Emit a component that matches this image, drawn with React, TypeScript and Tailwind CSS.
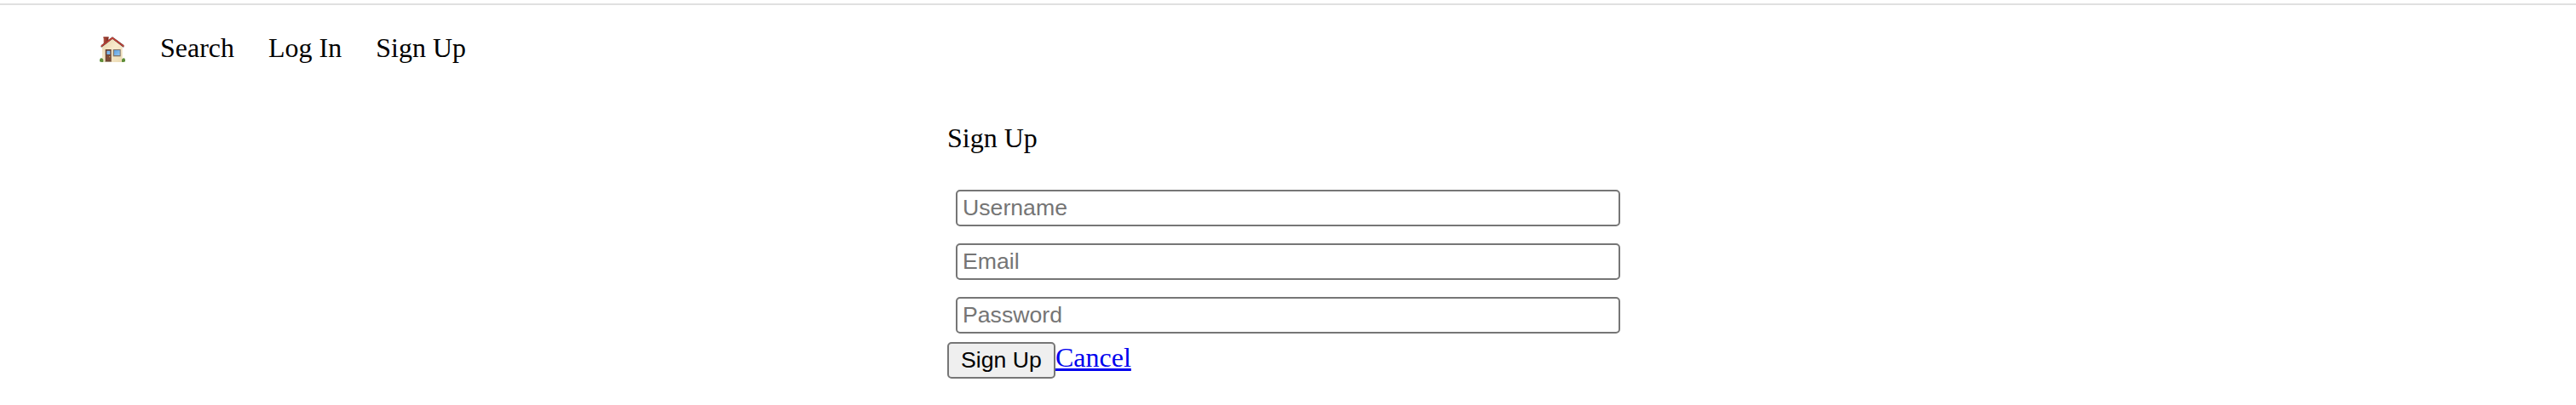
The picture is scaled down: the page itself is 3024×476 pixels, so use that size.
import React from "react";

const House = () => (
  <svg className="h-8 w-8" viewBox="0 0 96 96" role="img" aria-label="Home">
    <defs>
      <linearGradient id="wall" x1="0" y1="0" x2="1" y2="1">
        <stop offset="0" stopColor="#e6d3ab" />
        <stop offset="0.5" stopColor="#f8ebcd" />
        <stop offset="1" stopColor="#ead9b3" />
      </linearGradient>
      <linearGradient id="pane" x1="0" y1="0" x2="1" y2="1">
        <stop offset="0" stopColor="#5c9fe0" />
        <stop offset="1" stopColor="#91c6f2" />
      </linearGradient>
      <linearGradient id="brick" x1="0" y1="0" x2="1" y2="0">
        <stop offset="0" stopColor="#b4513f" />
        <stop offset="1" stopColor="#7c2a20" />
      </linearGradient>
    </defs>
    <rect x="17" y="5" width="17" height="27" fill="url(#brick)" />
    <rect x="16" y="4" width="19" height="4" fill="#93392d" />
    <path d="M12 38 L48 9 L83 38 V93 H12Z" fill="url(#wall)" />
    <path d="M8 40 L48 9 L88 40" fill="none" stroke="#3f3836" strokeWidth="4" />
    <path d="M9 35 L48 6 L88 35" fill="none" stroke="#5a3633" strokeWidth="4" />
    <path d="M8 37.5 L48 8 L88 37.5" fill="none" stroke="#cf3f35" strokeWidth="4.5" />
    <rect x="23" y="48" width="21" height="44" fill="#69402f" />
    <rect x="26" y="68" width="15" height="20" fill="#7e4d39" />
    <rect x="28" y="53" width="12" height="13" fill="#7db8ec" />
    <circle cx="38" cy="74" r="2" fill="#d8a65b" />
    <rect x="50" y="48" width="27" height="25" fill="#7f756b" />
    <rect x="54" y="51" width="20" height="18" fill="url(#pane)" />
    <rect x="22" y="91" width="23" height="2" fill="#aaa08e" />
    <path d="M3 91 Q2 80 9 79 Q13 79 16 84 V92 Q9 94 3 91Z" fill="#5d8d38" />
    <path d="M81 92 V84 Q84 79 88 79 Q94 80 93 91 Q87 94 81 92Z" fill="#5d8d38" />
  </svg>
);

const Field = ({ type, placeholder }: { type: string; placeholder: string }) => (
  <input
    type={type}
    placeholder={placeholder}
    className="h-[43px] w-[780px] rounded-[5px] border-2 border-[#767676] bg-white px-1.5 pb-px font-['Liberation_Sans',Arial,sans-serif] text-[26.667px] leading-[30px] text-black placeholder:text-[#757575]"
  />
);

export default function App() {
  return (
    <div className="flex h-[476px] flex-col bg-white pt-1 font-['Liberation_Serif','Times_New_Roman',serif] text-[32px] leading-[36px] text-black">
      <div className="h-0.5 shrink-0 bg-[#e0e0e0]" />
      <nav className="flex gap-10 pt-8 pl-[116px]">
        <a href="#" className="mt-1 h-8 w-8"><House /></a>
        <a href="#">Search</a>
        <a href="#">Log In</a>
        <a href="#">Sign Up</a>
      </nav>
      <main className="ml-[1112px] flex w-[800px] flex-col pt-[70px]">
        <h1>Sign Up</h1>
        <form className="pt-[43px]">
          <div className="flex flex-col gap-5 pl-2.5">
            <Field type="text" placeholder="Username" />
            <Field type="email" placeholder="Email" />
            <Field type="password" placeholder="Password" />
          </div>
          <div className="flex items-start pt-2.5">
            <button
              type="button"
              className="h-[43px] w-[127px] rounded-[5px] border-2 border-[#767676] bg-[#efefef] pb-0.5 font-['Liberation_Sans',Arial,sans-serif] text-[26.667px] leading-[30px] whitespace-nowrap"
            >
              Sign Up
            </button>
            <a href="#" className="text-[#0000ee] underline decoration-[3px] underline-offset-2">Cancel</a>
          </div>
        </form>
      </main>
    </div>
  );
}
